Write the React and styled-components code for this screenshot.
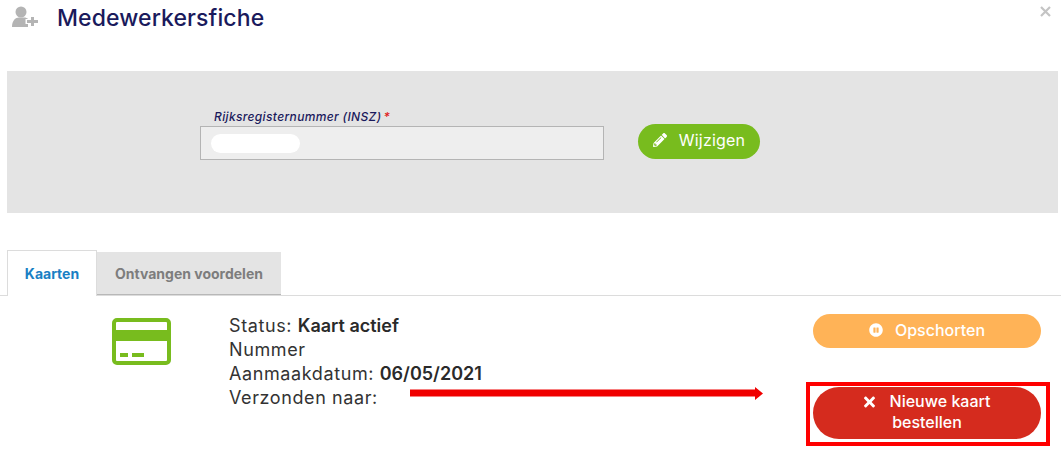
import React from 'react';
import styled, { createGlobalStyle } from 'styled-components';
import { FaPencilAlt, FaPauseCircle, FaTimes } from 'react-icons/fa';

const GlobalStyle = createGlobalStyle`
  html, body {
    margin: 0;
    padding: 0;
    background: #fff;
  }
  body {
    font-family: "Inter", "Open Sans", sans-serif;
  }
`;

const Page = styled.div`
  position: relative;
  width: 1061px;
  height: 452px;
  overflow: hidden;
  background: #fff;
`;

const Header = styled.header`
  display: flex;
  align-items: flex-start;
  height: 71px;
  box-sizing: border-box;
  padding: 5px 8px 0 11px;
`;

const UserIcon = styled.svg`
  width: 28px;
  height: 24px;
  flex: none;
`;

const Title = styled.h1`
  margin: 0 0 0 18px;
  flex: 1;
  font-size: 23px;
  line-height: 26px;
  font-weight: 500;
  letter-spacing: 0.1px;
  color: #1a1a5c;
`;

const Close = styled.svg`
  width: 11px;
  height: 11px;
  flex: none;
  margin: 1px 2px 0 0;
`;

const Band = styled.section`
  display: flex;
  align-items: flex-start;
  height: 142px;
  box-sizing: border-box;
  margin: 0 3px 0 7px;
  padding: 38px 0 0 193px;
  background: #e4e4e4;
`;

const Field = styled.div`
  display: flex;
  flex-direction: column;
  width: 404px;
`;

const Label = styled.label`
  padding-left: 14px;
  height: 17px;
  font-size: 12px;
  line-height: 15px;
  font-style: italic;
  font-weight: 500;
  letter-spacing: 0.35px;
  color: #1a1a5c;
`;

const Required = styled.span`
  color: #e02020;
  margin-left: 2px;
`;

const Input = styled.div`
  display: flex;
  align-items: center;
  height: 34px;
  box-sizing: border-box;
  padding-left: 10px;
  background: #eeeeee;
  border: 1px solid #b4b4b4;
`;

const Redaction = styled.div`
  width: 89px;
  height: 19px;
  border-radius: 10px;
  background: #fff;
`;

const PillButton = styled.button`
  display: flex;
  align-items: center;
  justify-content: center;
  border: 0;
  padding: 0;
  font-family: inherit;
  font-weight: 500;
  color: #fff;
  background: ${({ $bg }) => $bg};
  border-radius: 18px;
`;

const EditButton = styled(PillButton)`
  width: 122px;
  height: 35px;
  margin: 15px 0 0 34px;
  padding-bottom: 3px;
  gap: 12px;
  font-size: 16px;
  font-weight: 400;
  letter-spacing: 0.2px;
`;

const Tabs = styled.nav`
  display: flex;
  align-items: flex-end;
  height: 46px;
  margin: 36px 0 0 0;
  padding-left: 7px;
  border-bottom: 1px solid #dcdcdc;
`;

const ActiveTab = styled.div`
  display: flex;
  align-items: center;
  justify-content: center;
  width: 90px;
  height: 46px;
  margin-bottom: -1px;
  box-sizing: border-box;
  background: #fff;
  border: 1px solid #dcdcdc;
  border-bottom: 0;
  font-size: 14px;
  font-weight: 700;
  color: #1a7fc4;
`;

const Tab = styled.div`
  display: flex;
  align-items: center;
  justify-content: center;
  width: 184px;
  height: 43px;
  box-sizing: border-box;
  background: #e4e4e4;
  border-bottom: 1px solid #b8b8b8;
  font-size: 14px;
  font-weight: 700;
  color: #7d7d7d;
`;

const CardRow = styled.section`
  display: flex;
  align-items: flex-start;
  padding: 17px 0 0 112px;
`;

const CardIcon = styled.svg`
  width: 59px;
  height: 47px;
  flex: none;
  margin-top: 5px;
`;

const Details = styled.div`
  width: 584px;
  margin: 1px 0 0 58px;
  font-size: 18px;
  line-height: 24px;
  letter-spacing: 0.6px;
  color: #333;
`;

const DetailLine = styled.div`
  white-space: nowrap;
`;

const Strong = styled.strong`
  font-weight: 600;
  letter-spacing: 0;
  color: #2a2a2a;
`;

const Actions = styled.div`
  display: flex;
  flex-direction: column;
  width: 228px;
  padding-top: 1px;
`;

const PauseButton = styled(PillButton)`
  width: 228px;
  height: 34px;
  padding-bottom: 2px;
  gap: 12px;
  font-size: 16px;
`;

const HighlightBox = styled.div`
  width: 244px;
  height: 64px;
  box-sizing: border-box;
  margin: 34px 0 0 -7px;
  padding: 1px 5px 0 3px;
  border: 4px solid #ff0000;
`;

const OrderButton = styled(PillButton)`
  width: 228px;
  height: 52px;
  padding-bottom: 3px;
  font-size: 16px;
  line-height: 21px;
  border-radius: 26px;
  text-align: center;
`;

const OrderLabel = styled.span`
  width: 170px;
`;

const OrderIcon = styled(FaTimes)`
  width: 11px;
  height: 16px;
  margin-right: 15px;
  vertical-align: -3px;
`;

const Arrow = styled.svg`
  position: absolute;
  left: 410px;
  top: 387px;
  width: 353px;
  height: 13px;
`;

export default function App() {
  return (
    <Page>
      <GlobalStyle />
      <Header>
        <UserIcon viewBox="0 0 28 24">
          <circle cx="10" cy="7" r="5.5" fill="#b4b4b4" />
          <path d="M1 22 C1 15.5 4.5 12.5 8 12.5 L13 12.5 C15 12.5 16 13 17 14 L14.5 14 L14.5 19 L17 19 L17 22 Z" fill="#b4b4b4" />
          <path d="M20 12 H23 V15 H27 V18 H23 V21 H20 V18 H16 V15 H20 Z" fill="#b4b4b4" />
        </UserIcon>
        <Title>Medewerkersfiche</Title>
        <Close viewBox="0 0 11 11">
          <path d="M1 1 L10 10 M10 1 L1 10" stroke="#c4c4c4" strokeWidth="2.2" />
        </Close>
      </Header>

      <Band>
        <Field>
          <Label>
            Rijksregisternummer (INSZ)<Required>*</Required>
          </Label>
          <Input>
            <Redaction />
          </Input>
        </Field>
        <EditButton $bg="#78bc1e">
          <FaPencilAlt size={14} />
          Wijzigen
        </EditButton>
      </Band>

      <Tabs>
        <ActiveTab>Kaarten</ActiveTab>
        <Tab>Ontvangen voordelen</Tab>
      </Tabs>

      <CardRow>
        <CardIcon viewBox="0 0 59 47">
          <rect x="2" y="2" width="55" height="43" rx="3" fill="#fff" stroke="#78bc1e" strokeWidth="4" />
          <rect x="3" y="12" width="53" height="11" fill="#78bc1e" />
          <rect x="8" y="35" width="8" height="4" fill="#78bc1e" />
          <rect x="20" y="35" width="12" height="4" fill="#78bc1e" />
        </CardIcon>
        <Details>
          <DetailLine>
            Status: <Strong>Kaart actief</Strong>
          </DetailLine>
          <DetailLine>Nummer</DetailLine>
          <DetailLine>
            Aanmaakdatum: <Strong>06/05/2021</Strong>
          </DetailLine>
          <DetailLine>Verzonden naar:</DetailLine>
        </Details>
        <Actions>
          <PauseButton $bg="#ffb357">
            <FaPauseCircle size={14} />
            Opschorten
          </PauseButton>
          <HighlightBox>
            <OrderButton $bg="#d52b1e">
              <OrderLabel>
                <OrderIcon />
                Nieuwe kaart bestellen
              </OrderLabel>
            </OrderButton>
          </HighlightBox>
        </Actions>
      </CardRow>

      <Arrow viewBox="0 0 353 13">
        <path d="M0 2.5 H345 V0 L353 6.5 L345 13 V9.5 H0 Z" fill="#f00000" />
      </Arrow>
    </Page>
  );
}
